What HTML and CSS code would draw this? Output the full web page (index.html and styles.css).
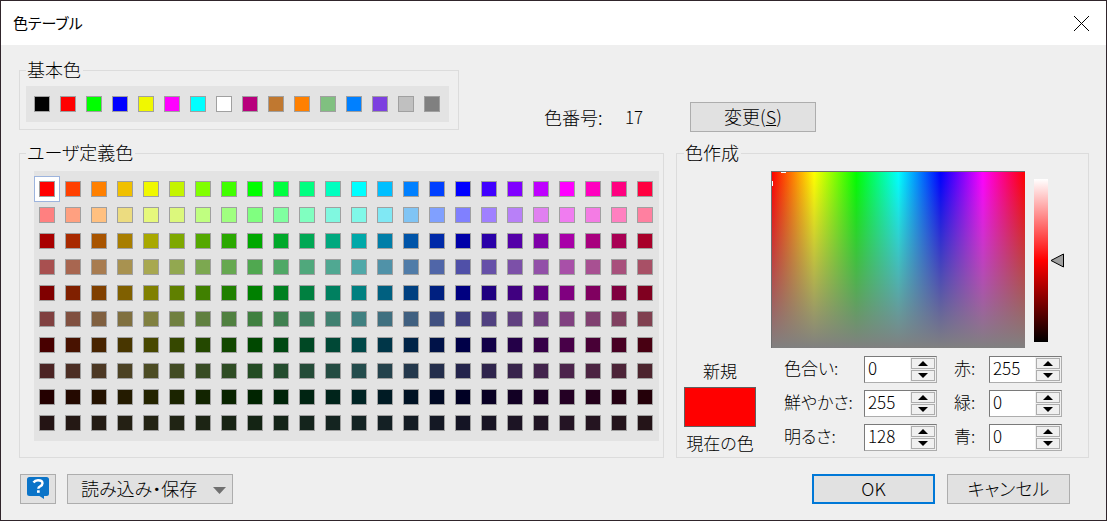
FILE: index.html
```html
<!DOCTYPE html>
<html lang="ja">
<head>
<meta charset="utf-8">
<title>色テーブル</title>
<link rel="stylesheet" href="styles.css">
</head>
<body>
<main class="dialog">
  <header class="titlebar">
    <h1 class="title">色テーブル</h1>
    <button class="close" type="button" aria-label="閉じる">
      <svg width="17" height="17" viewBox="0 0 17 17"><path d="M1 1L16 16M16 1L1 16" stroke="#000" stroke-width="1" fill="none"/></svg>
    </button>
  </header>
  <form class="content">
    <div class="top">
      <fieldset class="group basic">
        <legend>基本色</legend>
        <div class="panel basic-panel" id="basic"></div>
      </fieldset>
      <div class="number">
        <span class="number-label">色番号:</span>
        <output class="number-value">17</output>
        <button class="button change" type="button">変更(<u>S</u>)</button>
      </div>
    </div>
    <div class="middle">
      <fieldset class="group user">
        <legend>ユーザ定義色</legend>
        <div class="panel user-panel" id="user"></div>
      </fieldset>
      <fieldset class="group create">
        <legend>色作成</legend>
        <div class="picker">
          <div class="spectrum">
            <svg class="marker" width="16" height="16" viewBox="0 0 16 16"><path d="M9 .5h5M.5 9v5" stroke="#fff" fill="none"/></svg>
          </div>
          <div class="lightness"></div>
          <svg class="pointer" width="14" height="15" viewBox="0 0 14 15"><path d="M1 7.500L13.500 1V14Z" fill="#a0a0a0" stroke="#000"/></svg>
        </div>
        <div class="values">
          <div class="preview">
            <span>新規</span>
            <div class="preview-color"></div>
            <span>現在の色</span>
          </div>
          <div class="fields" id="fields">
            <label for="hue">色合い:</label>
            <div class="spin"><input id="hue" type="text" value="0"></div>
            <label class="second" for="red">赤:</label>
            <div class="spin"><input id="red" type="text" value="255"></div>
            <label for="sat">鮮やかさ:</label>
            <div class="spin"><input id="sat" type="text" value="255"></div>
            <label class="second" for="green">緑:</label>
            <div class="spin"><input id="green" type="text" value="0"></div>
            <label for="lum">明るさ:</label>
            <div class="spin"><input id="lum" type="text" value="128"></div>
            <label class="second" for="blue">青:</label>
            <div class="spin"><input id="blue" type="text" value="0"></div>
          </div>
        </div>
      </fieldset>
    </div>
    <footer class="footer">
      <button class="button help" type="button" aria-label="ヘルプ">
        <svg width="22" height="22" viewBox="0 0 22 22"><path d="M2.500 0h17Q22 0 22 2.500v14Q22 19 19.500 19H17v3l-4.500-3h-10Q0 19 0 16.500v-14Q0 0 2.500 0Z" fill="#0b74c8"/><path d="M6.500 5.500Q8 3.200 11 3.200q4.500 0 4.500 3.100 0 1.900-2.300 3-1.900 1-1.900 2.500" fill="none" stroke="#fff" stroke-width="2.400"/><rect x="10" y="13.300" width="2.700" height="2.500" fill="#fff"/></svg>
      </button>
      <button class="button menu" type="button">
        <span>読み込み・保存</span>
        <svg class="menu-arrow" width="13" height="7" viewBox="0 0 13 7"><path d="M0 0H13L6.500 7Z" fill="#707070"/></svg>
      </button>
      <button class="button action ok" type="submit">OK</button>
      <button class="button action" type="button">キャンセル</button>
    </footer>
  </form>
</main>
<script src="script.js"></script>
</body>
</html>
```
FILE: styles.css
```css
* { box-sizing: border-box; }

body {
  margin: 0;
  background: #f0f0f0;
  color: #000;
  font: 300 18px/18px "Noto Sans CJK JP", sans-serif;
  font-feature-settings: "palt";
}

.dialog {
  min-height: 100vh;
  border: 1px solid #30252b;
  background: #efefef;
}

.titlebar {
  display: flex;
  align-items: center;
  justify-content: space-between;
  height: 44px;
  padding: 0 16px 0 12px;
  background: #fff;
}

.title {
  margin: 0;
  font-size: 15px;
  font-weight: 400;
}

.close {
  display: flex;
  padding: 0;
  border: 0;
  background: none;
}

.content { padding: 16px 17px 16px 18px; }

.top {
  display: flex;
  align-items: flex-start;
}

.group {
  min-width: 0;
  margin: 0;
  padding: 0 6px;
  border: 1px solid #dcdcdc;
}

.group legend {
  height: 18px;
  padding: 0 2px 0 1px;
  line-height: 16px;
}

.basic { padding: 7px 9px 7px 6px; }

.panel {
  display: grid;
  gap: 10px;
  background: #e3e3e3;
}

.basic-panel {
  grid-template-columns: repeat(16, 16px);
  padding: 10px 9px 10px 8px;
}

.swatch {
  width: 16px;
  height: 16px;
  padding: 0;
  border: 1px solid #a0a0a0;
}

.swatch.selected {
  outline: 4px solid #fff;
  box-shadow: 0 0 0 5px #9db4dd;
}

.number {
  display: flex;
  align-items: center;
  padding: 41px 0 0 85px;
}

.number-label { width: 81px; }
.number-value { width: 65px; font-size: 17px; }

.button {
  display: flex;
  align-items: center;
  justify-content: center;
  height: 30px;
  padding: 0 0 2px;
  border: 1px solid #adadad;
  background: #e1e1e1;
  color: inherit;
  font: inherit;
  font-feature-settings: inherit;
}

.change { width: 126px; }

.middle {
  display: grid;
  grid-template-columns: max-content 1fr;
  gap: 12px;
  margin-top: 12px;
}

.user { padding: 9px 4px 16px 6px; }

.user-panel {
  grid-template-columns: repeat(24, 16px);
  margin-left: 8px;
  padding: 10px 6px 10px 5px;
}

.create { padding: 9px 24px 5px 7px; }

.picker {
  display: flex;
  padding-left: 87px;
}

.spectrum {
  flex: 1;
  height: 177px;
  border: solid #707070;
  border-width: 1px 0 0 1px;
  background:
    linear-gradient(to bottom, rgba(128, 128, 128, 0), #808080),
    linear-gradient(to right, #f00, #ff0, #0f0, #0ff, #00f, #f0f, #f00);
}

.marker { display: block; }

.lightness {
  width: 14px;
  height: 163px;
  margin: 8px 2px 0 9px;
  background: linear-gradient(to bottom, #fff, #f00 50%, #000);
}

.pointer { margin-top: 82px; }

.values {
  display: flex;
  gap: 28px;
  margin-top: 8px;
}

.preview {
  display: flex;
  flex-direction: column;
  align-items: center;
  gap: 7px;
  width: 72px;
  padding-top: 6px;
  font-size: 17px;
  white-space: nowrap;
}

.preview-color {
  width: 72px;
  height: 40px;
  border: 1px solid #606060;
  background: #f00;
}

.fields {
  display: grid;
  flex: 1;
  grid-template-columns: 80px 73px 52px 73px;
  row-gap: 7px;
  align-content: start;
}

.fields label {
  padding-top: 3px;
  font-size: 17px;
  white-space: nowrap;
}

.fields .second { margin-left: 17px; }

.spin {
  display: grid;
  grid-template-columns: 1fr 26px;
  height: 27px;
  border: 1px solid #adadad;
  border-top-color: #7a7a7a;
  border-left-color: #7a7a7a;
  background: #fff;
}

.spin input {
  min-width: 0;
  height: 25px;
  padding: 0 0 4px 3px;
  border: 0;
  background: none;
  color: inherit;
  font: inherit;
  font-size: 17px;
}

.arrows {
  display: grid;
  gap: 1px;
  padding: 1px;
  background: #f0f0f0;
}

.arrow {
  display: flex;
  align-items: center;
  justify-content: center;
  padding: 0;
  border: 1px solid #adadad;
  background: #f0f0f0;
}

.footer {
  display: flex;
  margin-top: 16px;
  padding: 0 19px 0 1px;
}

.help { width: 36px; }

.menu {
  justify-content: space-between;
  width: 166px;
  margin: 0 auto 0 11px;
  padding: 0 6px 2px 13px;
}

.menu-arrow { margin-top: 4px; }

.action {
  width: 123px;
  margin-left: 12px;
}

.ok { border: 2px solid #0078d7; }
```
FILE: script.js
```js
const basicColors = ['#000000', '#ff0000', '#00ff00', '#0000ff', '#f0f800', '#ff00ff', '#00ffff', '#ffffff',
  '#b8007c', '#c07830', '#ff8000', '#80c080', '#0080ff', '#7c40e0', '#c0c0c0', '#808080'];

// Brightest and darkest channel of each row of the user palette
const rows = [[255, 0], [255, 128], [168, 0], [168, 80], [128, 0], [128, 64], [72, 0], [76, 36], [36, 0], [36, 20]];

// Softer shades for the tones that would glare, keyed by row and column
const softened = {
  '0-3': '#f0c000', '0-4': '#f0f800', '0-5': '#c4f400',
  '1-3': '#ecdc80', '1-4': '#e6f87c', '1-5': '#dcf87c',
  '1-11': '#80f8e0', '1-12': '#80f8e8', '1-13': '#80e8f4', '1-14': '#80c4f4',
  '1-18': '#b880f8', '1-19': '#e080f0', '1-20': '#f07cf0', '1-21': '#f47ce4'
};

function addSwatch(parent, color, selected) {
  const swatch = document.createElement('button');
  swatch.type = 'button';
  swatch.className = selected ? 'swatch selected' : 'swatch';
  swatch.style.background = color;
  swatch.setAttribute('aria-label', color);
  parent.append(swatch);
}

const basic = document.getElementById('basic');
basicColors.forEach(color => addSwatch(basic, color, false));

const user = document.getElementById('user');
rows.forEach(([high, low], row) => {
  for (let column = 0; column < 24; column++) {
    const channel = offset => {
      const k = (offset + column / 4) % 6;
      const share = 1 - Math.max(0, Math.min(k, 4 - k, 1));
      return Math.round(low + (high - low) * share);
    };
    const color = softened[`${row}-${column}`] || `rgb(${channel(5)}, ${channel(3)}, ${channel(1)})`;
    addSwatch(user, color, row === 0 && column === 0);
  }
});

document.querySelectorAll('.spin').forEach(spin => {
  const arrows = document.createElement('div');
  arrows.className = 'arrows';
  [['増やす', 'M0 5L5 0L10 5Z'], ['減らす', 'M0 0H10L5 5Z']].forEach(([name, path]) => {
    arrows.insertAdjacentHTML('beforeend',
      `<button class="arrow" type="button" aria-label="${name}"><svg width="10" height="5" viewBox="0 0 10 5"><path d="${path}"/></svg></button>`);
  });
  spin.append(arrows);
});
```
